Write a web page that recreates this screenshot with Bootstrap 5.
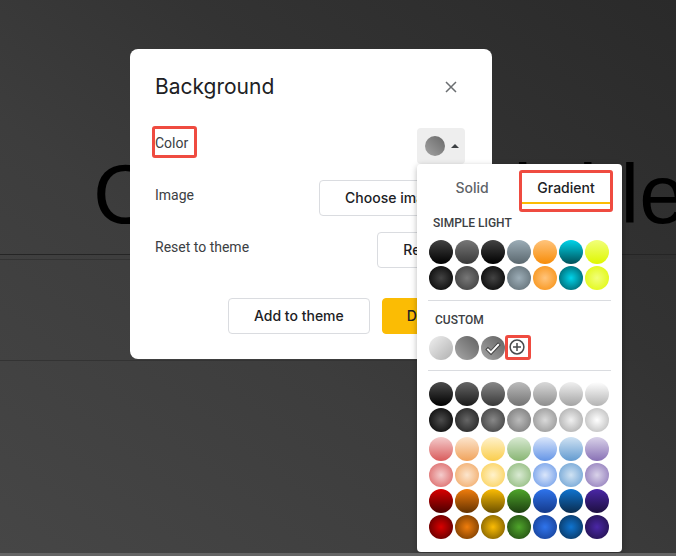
<!DOCTYPE html>
<html lang="en">
<head>
<meta charset="utf-8">
<meta name="viewport" content="width=device-width, initial-scale=1">
<title>Background</title>
<link href="https://cdn.jsdelivr.net/npm/bootstrap@5.3.0/dist/css/bootstrap.min.css" rel="stylesheet">
<style>
  body { font-family: Roboto, sans-serif; font-size: 14px; line-height: 20px; color: #3c4043; }
  .stage { background: linear-gradient(38deg, #464646, #3d3d3d 40%, #333 65%, #2a2a2a); overflow: hidden; padding: 49px 0 0 130px; border-bottom: 3px solid #646464; }
  /* slide behind the dialog */
  .slide-layer { pointer-events: none; }
  .slide-title { margin: 143px 0 0 93px; font: 84px/102px "Liberation Sans", Arial, sans-serif; color: #000; white-space: nowrap; }
  .slide-title-wrap { border-bottom: 1px solid #252525; height: 255px; overflow: hidden; }
  .slide-sub { margin-top: 4px; height: 102px; border: solid #333; border-width: 1px 0; }

  .dialog { max-width: 362px; border-radius: 8px; padding: 24px 25px 25px; }
  .dialog h1 { font: 400 21px/28px Inter, sans-serif; color: #202124; }
  .close-btn { width: 32px; height: 28px; }
  .setting { min-height: 36px; }
  .setting-label { line-height: 30px; }
  .rows { margin-top: 27px; gap: 16px; }
  .foot { margin-top: 30px; gap: 12px; }
  .ui-btn { font: 500 14px/20px Inter, sans-serif; height: 36px; padding: 7px 25px; border: 1px solid #dadce0; border-radius: 4px; background: #fff; color: #202124; white-space: nowrap; }
  .ui-btn.primary { background: #fbbc04; border-color: #fbbc04; padding: 7px 24px; }
  .color-btn { width: 48px; height: 36px; border-radius: 4px; background: #eee; margin-right: 2px; gap: 6px; padding: 0 0 0 2px; }
  .chip { width: 20px; height: 20px; border-radius: 50%; background: linear-gradient(45deg, #a4a4a4, #686868); }

  .picker { top: 36px; left: 0; z-index: 5; width: 205px; padding: 6px 11px 13px; border-radius: 4px; background: #fff; box-shadow: 0 2px 6px rgba(0,0,0,.28); }
  .tabs { height: 40px; padding-right: 1px; gap: 6px; }
  .tab-btn { font: 500 14px/20px Inter, sans-serif; height: 34px; color: #5f6368; padding: 8px 0 6px; }
  .tab-btn.on { color: #202124; padding-bottom: 4px; border-bottom: 2px solid #fbbc04; }
  .group-title { font: 500 12px/16px Roboto, sans-serif; color: #3c4043; margin: 5px 0 9px 5px; }
  .group-title.custom { margin: 11px 0 8px 7px; }
  .rule { height: 1px; background: #dadce0; margin-top: 10px; }
  .swatches { display: grid; grid-template-columns: repeat(7, 24px); gap: 2px; margin-left: 1px; margin-bottom: 2px; }
  .swatches.last { margin-bottom: 0; }
  .swatches.brights { margin-top: 5px; }
  .swatches.first { margin-top: 11px; }
  .swatches button { width: 24px; height: 24px; border-radius: 50%; border: 0; padding: 0; }
  .lin button { background: linear-gradient(var(--a), var(--b)); }
  .rad button { background: radial-gradient(var(--a), var(--b)); }
  .theme :nth-child(1), .theme :nth-child(3) { --a: #434343; --b: #000; }
  .theme :nth-child(2) { --a: #777; --b: #383838; }
  .theme :nth-child(4) { --a: #9cadb7; --b: #5a676e; }
  .theme :nth-child(5) { --a: #ffc47c; --b: #f78c08; }
  .theme :nth-child(6) { --a: #00d4ea; --b: #005058; }
  .theme :nth-child(7) { --a: #f1ff7a; --b: #dff700; }
  .gray :nth-child(1) { --a: #4c4c4c; --b: #000; }
  .gray :nth-child(2) { --a: #666; --b: #1a1a1a; }
  .gray :nth-child(3) { --a: #888; --b: #383838; }
  .gray :nth-child(4) { --a: #bbb; --b: #737373; }
  .gray :nth-child(5) { --a: #d9d9d9; --b: #8d8d8d; }
  .gray :nth-child(6) { --a: #f0f0f0; --b: #a3a3a3; }
  .gray :nth-child(7) { --a: #fff; --b: #b3b3b3; }
  .pastel :nth-child(1) { --a: #f4cccc; --b: #d95c5c; }
  .pastel :nth-child(2) { --a: #fce5cd; --b: #f0a35c; }
  .pastel :nth-child(3) { --a: #fff2cc; --b: #facd4c; }
  .pastel :nth-child(4) { --a: #d9ead3; --b: #88b573; }
  .pastel :nth-child(5) { --a: #dae6fb; --b: #6595e6; }
  .pastel :nth-child(6) { --a: #cfe2f3; --b: #639bd0; }
  .pastel :nth-child(7) { --a: #d9d2e9; --b: #8871b5; }
  .vivid :nth-child(1) { --a: #d90000; --b: #4a0000; }
  .vivid :nth-child(2) { --a: #f07d0c; --b: #643200; }
  .vivid :nth-child(3) { --a: #fbbc04; --b: #6b5000; }
  .vivid :nth-child(4) { --a: #4fa52b; --b: #1d3f10; }
  .vivid :nth-child(5) { --a: #2f74ec; --b: #14398a; }
  .vivid :nth-child(6) { --a: #0f74d0; --b: #0a2c4e; }
  .vivid :nth-child(7) { --a: #4a27a6; --b: #1d0f40; }
  .mine > button { background: linear-gradient(45deg, #a8a8a8, #606060); }
  .mine > button:first-child { background: linear-gradient(135deg, #f0f0f0, #b0b0b0); }
  .mine > .add { background: none; }
  .swatches svg, .color-btn svg { display: block; }

  /* red callouts */
  .callout { position: relative; }
  .callout::after { content: ""; position: absolute; inset: var(--gap); border: 3px solid #ef4b40; border-radius: 3px; pointer-events: none; }
  .on-label { --gap: -2px -9px 0 -3px; }
  .on-tab { --gap: 0 -3px -10px -3px; }
  .on-add { --gap: -1px 0 0 -2px; }
</style>
</head>
<body>
<div class="stage position-relative vh-100">
  <div class="slide-layer position-absolute top-0 start-0 w-100" aria-hidden="true">
    <div class="slide-title-wrap"><div class="slide-title">Click to add title</div></div>
    <div class="slide-sub"></div>
  </div>

  <main class="dialog bg-white position-relative" role="dialog" aria-labelledby="dlg-title">
    <div class="d-flex justify-content-between align-items-center">
      <h1 id="dlg-title" class="m-0">Background</h1>
      <button type="button" class="close-btn btn p-0 border-0 d-flex align-items-center justify-content-center" aria-label="Close">
        <svg width="12" height="12" viewBox="0 0 12 12" fill="none" stroke="#6b6e71" stroke-width="1.5"><path d="M1 1l10 10M11 1L1 11"/></svg>
      </button>
    </div>

    <div class="rows d-flex flex-column">
      <div class="setting d-flex justify-content-between align-items-start">
        <label class="setting-label callout on-label" for="color-btn">Color</label>
        <div class="position-relative">
          <button type="button" id="color-btn" class="color-btn border-0 d-flex align-items-center justify-content-center" aria-expanded="true">
            <span class="chip"></span>
            <svg width="8" height="4" viewBox="0 0 8 4" fill="#3c4043"><path d="M0 4l4-4 4 4z"/></svg>
          </button>

          <div class="picker position-absolute">
            <div class="tabs d-flex align-items-start" role="tablist">
              <button type="button" role="tab" class="tab-btn w-50 border-0 bg-transparent">Solid</button>
              <button type="button" role="tab" aria-selected="true" class="tab-btn on callout on-tab w-50 border-top-0 border-start-0 border-end-0 bg-transparent">Gradient</button>
            </div>
            <h2 class="group-title">SIMPLE LIGHT</h2>
            <div class="swatches lin theme">
              <button aria-label="Dark 1"></button><button aria-label="Dark 2"></button><button aria-label="Accent 1"></button><button aria-label="Accent 2"></button><button aria-label="Accent 3"></button><button aria-label="Accent 4"></button><button aria-label="Accent 5"></button>
            </div>
            <div class="swatches last rad theme">
              <button aria-label="Radial dark 1"></button><button aria-label="Radial dark 2"></button><button aria-label="Radial accent 1"></button><button aria-label="Radial accent 2"></button><button aria-label="Radial accent 3"></button><button aria-label="Radial accent 4"></button><button aria-label="Radial accent 5"></button>
            </div>
            <div class="rule"></div>
            <h2 class="group-title custom">CUSTOM</h2>
            <div class="swatches last mine">
              <button aria-label="Custom light gray"></button>
              <button aria-label="Custom gray"></button>
              <button aria-label="Custom gray, selected"><svg width="24" height="24" viewBox="0 0 24 24" fill="none"><path d="M5.6 12.1l4.4 4.4L18.4 7.6" stroke="#444" stroke-width="3.8"/><path d="M6.3 12.8l3.7 3.7 7.8-8.3" stroke="#fff" stroke-width="1.9"/></svg></button>
              <button class="add callout on-add" aria-label="Add a custom gradient"><svg width="24" height="24" viewBox="0 0 24 24" fill="none" stroke="#484b4e" stroke-width="1.5"><circle cx="10" cy="11" r="6.9"/><path d="M10 7v8M6 11h8"/></svg></button>
            </div>
            <div class="rule"></div>
            <div class="swatches first lin gray">
              <button aria-label="Black"></button><button aria-label="Dark gray 4"></button><button aria-label="Dark gray 3"></button><button aria-label="Gray"></button><button aria-label="Light gray 2"></button><button aria-label="Light gray 3"></button><button aria-label="White"></button>
            </div>
            <div class="swatches last rad gray">
              <button aria-label="Radial black"></button><button aria-label="Radial dark gray 4"></button><button aria-label="Radial dark gray 3"></button><button aria-label="Radial gray"></button><button aria-label="Radial light gray 2"></button><button aria-label="Radial light gray 3"></button><button aria-label="Radial white"></button>
            </div>
            <div class="swatches brights lin pastel">
              <button aria-label="Light red"></button><button aria-label="Light orange"></button><button aria-label="Light yellow"></button><button aria-label="Light green"></button><button aria-label="Light cornflower"></button><button aria-label="Light blue"></button><button aria-label="Light purple"></button>
            </div>
            <div class="swatches rad pastel">
              <button aria-label="Radial light red"></button><button aria-label="Radial light orange"></button><button aria-label="Radial light yellow"></button><button aria-label="Radial light green"></button><button aria-label="Radial light cornflower"></button><button aria-label="Radial light blue"></button><button aria-label="Radial light purple"></button>
            </div>
            <div class="swatches lin vivid">
              <button aria-label="Red"></button><button aria-label="Orange"></button><button aria-label="Yellow"></button><button aria-label="Green"></button><button aria-label="Cornflower"></button><button aria-label="Blue"></button><button aria-label="Purple"></button>
            </div>
            <div class="swatches last rad vivid">
              <button aria-label="Radial red"></button><button aria-label="Radial orange"></button><button aria-label="Radial yellow"></button><button aria-label="Radial green"></button><button aria-label="Radial cornflower"></button><button aria-label="Radial blue"></button><button aria-label="Radial purple"></button>
            </div>
          </div>
        </div>
      </div>
      <div class="setting d-flex justify-content-between align-items-start">
        <label class="setting-label" for="image-btn">Image</label>
        <button type="button" id="image-btn" class="ui-btn">Choose image</button>
      </div>
      <div class="setting d-flex justify-content-between align-items-start">
        <label class="setting-label" for="reset-btn">Reset to theme</label>
        <button type="button" id="reset-btn" class="ui-btn">Reset</button>
      </div>
    </div>

    <div class="foot d-flex justify-content-end">
      <button type="button" class="ui-btn">Add to theme</button>
      <button type="button" class="ui-btn primary">Done</button>
    </div>
  </main>
</div>
<script src="https://cdn.jsdelivr.net/npm/bootstrap@5.3.0/dist/js/bootstrap.bundle.min.js"></script>
</body>
</html>
